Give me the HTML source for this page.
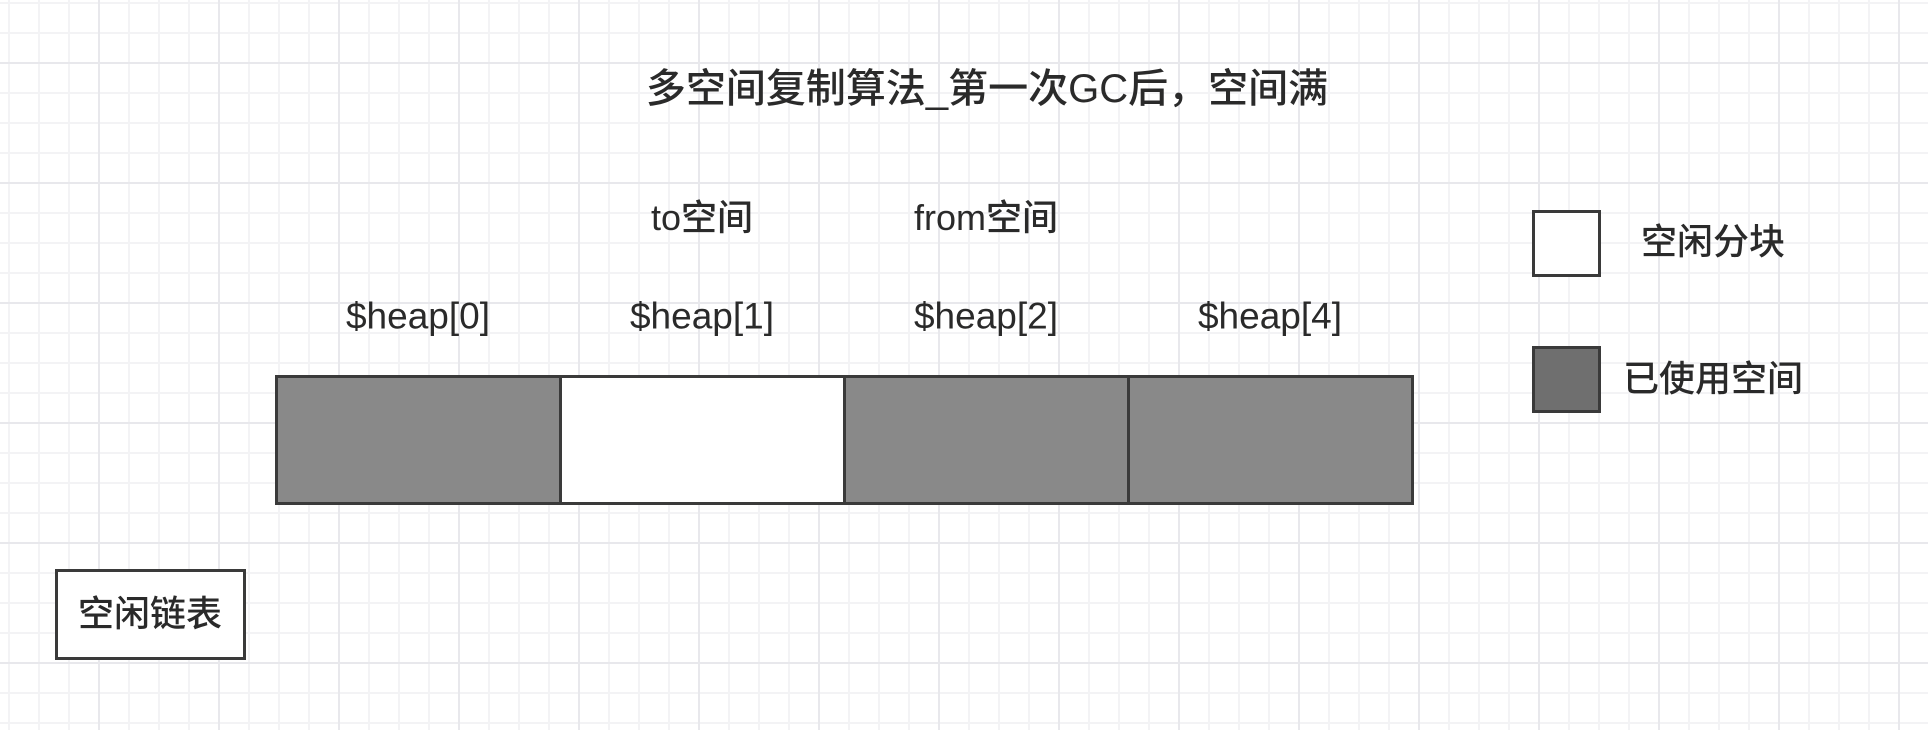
<!DOCTYPE html>
<html><head><meta charset="utf-8"><style>
html,body{margin:0;padding:0}
body{width:1928px;height:730px;position:relative;overflow:hidden;background-color:#fff;
background-image:
linear-gradient(to right,#e8e8ec 2px,transparent 2px),
linear-gradient(to bottom,#e8e8ec 2px,transparent 2px),
linear-gradient(to right,#f3f3f5 2px,transparent 2px),
linear-gradient(to bottom,#f3f3f5 2px,transparent 2px);
background-size:120px 120px,120px 120px,30px 30px,30px 30px;
background-position:98px 0,0 62px,8px 0,0 2px;
font-family:"Liberation Sans","Noto Sans CJK SC",sans-serif;color:#2a2a2a}
.t{position:absolute;white-space:nowrap;transform:translate(-50%,-50%);line-height:1;font-weight:500}
.b{position:absolute;box-sizing:border-box;border:3px solid #3a3a3a}
</style></head><body>
<div class="t" style="left:987px;top:89px;font-size:40px;font-weight:500">多空间复制算法_第一次GC后，空间满</div>
<div class="t" style="left:702px;top:218px;font-size:36px">to空间</div>
<div class="t" style="left:986px;top:218px;font-size:36px">from空间</div>
<div class="t" style="left:418px;top:316px;font-size:37px">$heap[0]</div>
<div class="t" style="left:702px;top:316px;font-size:37px">$heap[1]</div>
<div class="t" style="left:986px;top:316px;font-size:37px">$heap[2]</div>
<div class="t" style="left:1270px;top:316px;font-size:37px">$heap[4]</div>
<div class="b" style="left:275px;top:375px;width:288px;height:130px;background:#898989"></div>
<div class="b" style="left:559px;top:375px;width:288px;height:130px;background:#fff"></div>
<div class="b" style="left:843px;top:375px;width:288px;height:130px;background:#898989"></div>
<div class="b" style="left:1127px;top:375px;width:287px;height:130px;background:#898989"></div>
<div class="b" style="left:55px;top:569px;width:191px;height:91px;background:#fff"></div>
<div class="t" style="left:150px;top:614px;font-size:36px">空闲链表</div>
<div class="b" style="left:1532px;top:210px;width:69px;height:67px;background:#fff"></div>
<div class="b" style="left:1532px;top:346px;width:69px;height:67px;background:#6f6f6f"></div>
<div class="t" style="left:1713px;top:242px;font-size:36px">空闲分块</div>
<div class="t" style="left:1713px;top:379px;font-size:36px">已使用空间</div>
</body></html>
